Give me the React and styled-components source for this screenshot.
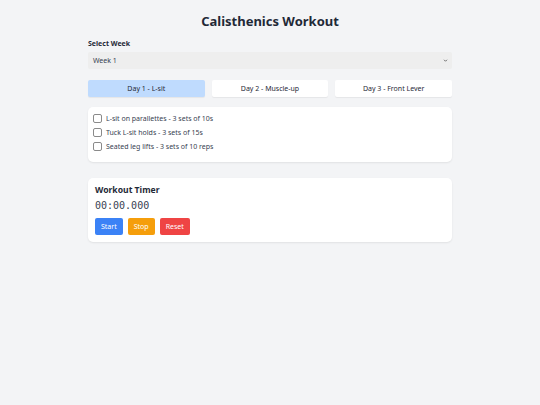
import React, { useState } from "react";
import styled, { createGlobalStyle, css } from "styled-components";

const GlobalStyle = createGlobalStyle`
  html, body {
    margin: 0;
    padding: 0;
    background: #f3f4f6;
    font-family: "Noto Sans", "Open Sans", sans-serif;
    color: #1f2937;
  }
  * { box-sizing: border-box; }
`;

const Page = styled.div`
  width: 364px;
  margin: 0 auto;
  padding-top: 12px;
  min-height: 405px;
`;

const Title = styled.h1`
  margin: 0 0 9px;
  font-size: 13px;
  line-height: 18px;
  font-weight: 700;
  text-align: center;
  color: #1f2937;
`;

const Label = styled.label`
  display: block;
  font-size: 7px;
  font-weight: 700;
  line-height: 10px;
  margin-bottom: 3px;
  color: #1f2937;
`;

const SelectBox = styled.div`
  position: relative;
  height: 17px;
  background: #eeeeee;
  border-radius: 2px;
  display: flex;
  align-items: center;
  padding-left: 5px;
  font-size: 7px;
  color: #374151;
`;

const Chevron = styled.svg`
  position: absolute;
  right: 4px;
  top: 6px;
  width: 5px;
  height: 5px;
`;

const DayRow = styled.div`
  display: grid;
  grid-template-columns: repeat(3, 1fr);
  gap: 7px;
  margin-top: 11px;
`;

const DayButton = styled.button`
  height: 17px;
  border: none;
  border-radius: 2px;
  background: #ffffff;
  font-family: inherit;
  font-size: 7px;
  color: #1f2937;
  box-shadow: 0 1px 1px rgba(0, 0, 0, 0.06);
  padding: 0;
  cursor: pointer;

  ${({ $active }) =>
    $active &&
    css`
      background: #bfdbfe;
    `}
`;

const Card = styled.div`
  background: #ffffff;
  border-radius: 5px;
  box-shadow: 0 1px 2px rgba(0, 0, 0, 0.08);
  margin-top: ${({ $gap }) => $gap}px;
  padding: ${({ $pad }) => $pad};
`;

const ExerciseList = styled.ul`
  list-style: none;
  margin: 0;
  padding: 0;
  display: flex;
  flex-direction: column;
  gap: 5px;
`;

const Exercise = styled.li`
  display: flex;
  align-items: center;
  gap: 4px;
  font-size: 7px;
  line-height: 9px;
  color: #374151;
`;

const Box = styled.span`
  width: 9px;
  height: 9px;
  border: 1px solid #8a8a8a;
  border-radius: 2px;
  background: #fff;
  flex-shrink: 0;
`;

const TimerTitle = styled.h2`
  margin: 0;
  font-size: 8.6px;
  line-height: 13px;
  font-weight: 700;
  color: #1f2937;
`;

const TimerText = styled.div`
  font-family: "DejaVu Sans Mono", "Liberation Mono", monospace;
  font-size: 10px;
  line-height: 16px;
  margin-top: 1px;
  color: #374151;
`;

const ButtonRow = styled.div`
  display: flex;
  gap: 5px;
  margin-top: 4px;
`;

const colors = {
  blue: "#3b82f6",
  amber: "#f59e0b",
  red: "#ef4444",
};

const TimerButton = styled.button`
  height: 17px;
  padding: 0 6px;
  border: none;
  border-radius: 2px;
  font-family: inherit;
  font-size: 7px;
  color: #ffffff;
  background: ${({ $color }) => colors[$color]};
  cursor: pointer;
`;

const exercises = [
  "L-sit on parallettes - 3 sets of 10s",
  "Tuck L-sit holds - 3 sets of 15s",
  "Seated leg lifts - 3 sets of 10 reps",
];

const days = ["Day 1 - L-sit", "Day 2 - Muscle-up", "Day 3 - Front Lever"];

export default function App() {
  const [day, setDay] = useState(0);

  return (
    <>
      <GlobalStyle />
      <Page>
        <Title>Calisthenics Workout</Title>
        <Label>Select Week</Label>
        <SelectBox>
          Week 1
          <Chevron viewBox="0 0 10 10">
            <path d="M2 3.5 L5 6.5 L8 3.5" fill="none" stroke="#444" strokeWidth="1.5" />
          </Chevron>
        </SelectBox>
        <DayRow>
          {days.map((d, i) => (
            <DayButton key={d} $active={i === day} onClick={() => setDay(i)}>
              {d}
            </DayButton>
          ))}
        </DayRow>
        <Card $gap={10} $pad="7px 5px 11px">
          <ExerciseList>
            {exercises.map((e) => (
              <Exercise key={e}>
                <Box />
                {e}
              </Exercise>
            ))}
          </ExerciseList>
        </Card>
        <Card $gap={16} $pad="6px 7px 7px">
          <TimerTitle>Workout Timer</TimerTitle>
          <TimerText>00:00.000</TimerText>
          <ButtonRow>
            <TimerButton $color="blue">Start</TimerButton>
            <TimerButton $color="amber">Stop</TimerButton>
            <TimerButton $color="red">Reset</TimerButton>
          </ButtonRow>
        </Card>
      </Page>
    </>
  );
}
